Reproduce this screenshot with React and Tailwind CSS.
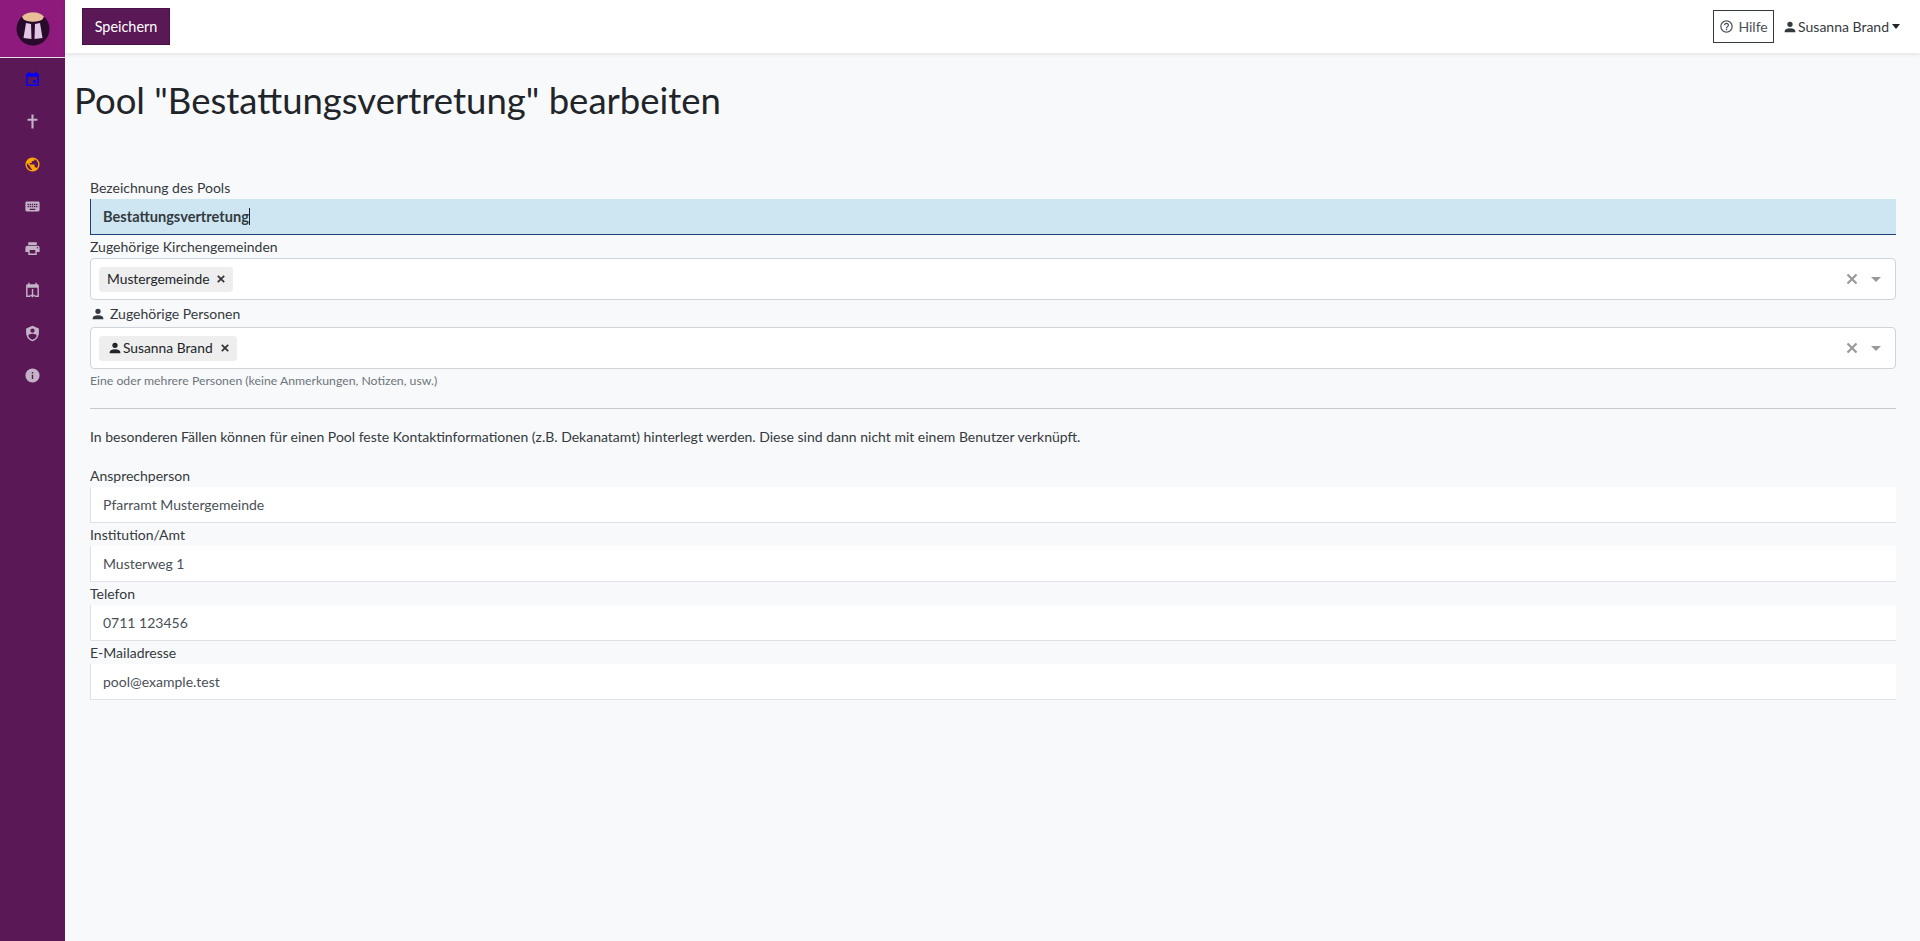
import React from 'react';

const paths = {
  today: 'M13,13H17V17H13M19,19H5V8H19M19,3H18V1H16V3H8V1H6V3H5C3.89,3 3,3.9 3,5V19A2,2 0 0,0 5,21H19A2,2 0 0,0 21,19V5A2,2 0 0,0 19,3Z',
  cross: 'M10.5,2H13.5V8H19V11H13.5V22H10.5V11H5V8H10.5Z',
  earth: 'M17.9,17.39C17.64,16.59 16.89,16 16,16H15V13A1,1 0 0,0 14,12H8V10H10A1,1 0 0,0 11,9V7H13A2,2 0 0,0 15,5V4.59C17.93,5.77 20,8.64 20,12C20,14.08 19.2,15.97 17.9,17.39M11,19.93C7.05,19.44 4,16.08 4,12C4,11.38 4.08,10.78 4.21,10.21L9,15V16A2,2 0 0,0 11,18M12,2A10,10 0 0,0 2,12A10,10 0 0,0 12,22A10,10 0 0,0 22,12A10,10 0 0,0 12,2Z',
  keyboard: 'M19,10H17V8H19M19,13H17V11H19M16,10H14V8H16M16,13H14V11H16M16,17H8V15H16M7,10H5V8H7M7,13H5V11H7M8,11H10V13H8M8,8H10V10H8M11,11H13V13H11M11,8H13V10H11M20,5H4C2.89,5 2,5.89 2,7V17A2,2 0 0,0 4,19H20A2,2 0 0,0 22,17V7C22,5.89 21.1,5 20,5Z',
  printer: 'M18,3H6V7H18M19,12A1,1 0 0,1 18,11A1,1 0 0,1 19,10A1,1 0 0,1 20,11A1,1 0 0,1 19,12M16,19H8V14H16M19,8H5A3,3 0 0,0 2,11V17H6V21H18V17H22V11A3,3 0 0,0 19,8Z',
  calendarDown: 'M6,1H8V3H16V1H18V3H19A2,2 0 0,1 21,5V21H15V19H19V8H5V19H9V21H3V5A2,2 0 0,1 5,3H6M11,10H13V18H16L12,22L8,18H11Z',
  shield: 'M12,1L3,5V11C3,16.55 6.84,21.74 12,23C17.16,21.74 21,16.55 21,11V5L12,1M12,5A3,3 0 0,1 15,8A3,3 0 0,1 12,11A3,3 0 0,1 9,8A3,3 0 0,1 12,5M17.13,17C15.92,18.85 14.11,20.24 12,20.92C9.89,20.24 8.08,18.85 6.87,17C6.53,16.5 6.24,16 6,15.47C6,13.82 8.71,12.47 12,12.47C15.29,12.47 18,13.79 18,15.47C17.76,16 17.47,16.5 17.13,17Z',
  info: 'M13,9H11V7H13M13,17H11V11H13M12,2A10,10 0 0,0 2,12A10,10 0 0,0 12,22A10,10 0 0,0 22,12A10,10 0 0,0 12,2Z',
  account: 'M12,4A4,4 0 0,1 16,8A4,4 0 0,1 12,12A4,4 0 0,1 8,8A4,4 0 0,1 12,4M12,14C16.42,14 20,15.79 20,18V20H4V18C4,15.79 7.58,14 12,14Z',
  help: 'M11,18H13V16H11V18M12,2A10,10 0 0,0 2,12A10,10 0 0,0 12,22A10,10 0 0,0 22,12A10,10 0 0,0 12,2M12,20C7.59,20 4,16.41 4,12C4,7.59 7.59,4 12,4C16.41,4 20,7.59 20,12C20,16.41 16.41,20 12,20M12,6A4,4 0 0,0 8,10H10A2,2 0 0,1 12,8A2,2 0 0,1 14,10C14,12 11,11.75 11,15H13C13,12.75 16,12.5 16,10A4,4 0 0,0 12,6Z',
};

const Icon = ({ name, className = '' }) => (
  <svg viewBox="0 0 24 24" fill="currentColor" className={`shrink-0 ${className}`}>
    <path d={paths[name]} />
  </svg>
);

const navItems = [
  { name: 'today', color: 'text-[#0000ff]' },
  { name: 'cross', color: 'text-[#c4b3c6]' },
  { name: 'earth', color: 'text-[#ffa500]' },
  { name: 'keyboard', color: 'text-[#c4b3c6]' },
  { name: 'printer', color: 'text-[#c4b3c6]' },
  { name: 'calendarDown', color: 'text-[#c4b3c6]' },
  { name: 'shield', color: 'text-[#c4b3c6]' },
  { name: 'info', color: 'text-[#c4b3c6]' },
];

const Logo = () => (
  <svg viewBox="0 0 34 34" className="w-[34px] h-[34px]">
    <circle cx="17" cy="17" r="16.5" fill="#2a0a2c" />
    <path d="M6 4.5 A16.5 16.5 0 0 1 28 4.5 Q27 8 23 9 Q17 10.5 11 9 Q7 8 6 4.5Z" fill="#e8bd98" />
    <path d="M10 11 L15 12 L15.5 27 L7.5 26 Z" fill="#e2c6e4" />
    <path d="M19 12 L24 11 L26.5 26 L18.5 27 Z" fill="#e2c6e4" />
  </svg>
);

const Sidebar = () => (
  <aside className="w-[65px] shrink-0 bg-[#5a1857] flex flex-col">
    <div className="h-[58px] bg-[#8e1a7e] border-b border-[#e8dbe8] flex items-center justify-center pt-[1px]">
      <Logo />
    </div>
    <nav className="flex flex-col items-center pt-[13px] pr-[1px] gap-[25.3px]">
      {navItems.map((item) => (
        <Icon key={item.name} name={item.name} className={`w-[17px] h-[17px] ${item.color}`} />
      ))}
    </nav>
  </aside>
);

const TextField = ({ label, value }) => (
  <div>
    <div className="h-[23px] leading-[23px]">{label}</div>
    <div className="h-[36px] bg-white border-l border-b border-[#dee2e6] pl-[12px] leading-[35px] text-[#495057]">{value}</div>
  </div>
);

const Chip = ({ children, person }) => (
  <span className="h-[25px] bg-[#eeeeee] rounded-[4px] pl-[8px] pr-[8px] flex items-center text-[13.8px] text-[#212529]">
    {person && <Icon name="account" className="w-[16px] h-[16px]" />}
    <span>{children}</span>
    <svg viewBox="0 0 8 8" className="w-[8px] h-[8px] ml-[8px] text-[#333333]">
      <path d="M0.8 0.8 L7.2 7.2 M7.2 0.8 L0.8 7.2" stroke="currentColor" strokeWidth="1.7" fill="none" />
    </svg>
  </span>
);

const SelectField = ({ children }) => (
  <div className="h-[42px] bg-white border border-[#ced4da] rounded-[4px] flex items-center justify-between pl-[8px] pr-[14px]">
    {children}
    <div className="flex items-center gap-[13px] text-[#999999]">
      <svg viewBox="0 0 12 12" className="w-[12px] h-[12px]">
        <path d="M1.5 1.5 L10.5 10.5 M10.5 1.5 L1.5 10.5" stroke="currentColor" strokeWidth="2.2" fill="none" />
      </svg>
      <span className="w-0 h-0 border-x-[5px] border-x-transparent border-t-[5px] border-t-[#999999]" />
    </div>
  </div>
);

const App = () => (
  <div className="flex h-screen overflow-hidden bg-[#f8f9fa] text-[#343a40] text-[14px] font-['Lato',sans-serif]">
    <Sidebar />
    <div className="flex-1 min-w-0 flex flex-col">
      <header className="h-[53px] shrink-0 bg-white shadow-[0_2px_4px_rgba(0,0,0,0.08)] flex items-center justify-between pl-[17px] pr-[20px]">
        <button className="h-[37px] w-[88px] bg-[#5a1857] border border-[#4a1048] text-white text-[14.4px]">Speichern</button>
        <div className="flex items-center">
          <button className="h-[33px] w-[61px] border border-[#343a40] flex items-center justify-center gap-[4px] text-[#495057]">
            <Icon name="help" className="w-[15px] h-[15px]" />
            Hilfe
          </button>
          <div className="flex items-center ml-[8px] text-[#343a40]">
            <Icon name="account" className="w-[16px] h-[16px]" />
            <span>Susanna Brand</span>
            <span className="ml-[3px] w-0 h-0 border-x-[4px] border-x-transparent border-t-[5px] border-t-[#212529]" />
          </div>
        </div>
      </header>
      <main className="pl-[9px] pr-[24px]">
        <h1 className="text-[36.5px] leading-[43px] mt-[26px] font-normal text-[#212529]">Pool "Bestattungsvertretung" bearbeiten</h1>
        <form className="pl-[16px] mt-[55px]">
          <div className="h-[22px] leading-[22px]">Bezeichnung des Pools</div>
          <div className="h-[36px] bg-[#cde6f1] border-l border-b border-[#1f3f77] pl-[12px] font-bold text-[14.6px] text-[#343a40] flex items-center">
            Bestattungsvertretung
            <span className="w-[1px] h-[17px] bg-[#212529]" />
          </div>
          <div className="h-[23px] leading-[23px]">Zugehörige Kirchengemeinden</div>
          <SelectField>
            <Chip>Mustergemeinde</Chip>
          </SelectField>
          <div className="h-[27px] flex items-center gap-[4px]">
            <Icon name="account" className="w-[16px] h-[16px]" />
            Zugehörige Personen
          </div>
          <SelectField>
            <Chip person>Susanna Brand</Chip>
          </SelectField>
          <div className="h-[24px] leading-[24px] text-[12.25px] text-[#6c757d]">Eine oder mehrere Personen (keine Anmerkungen, Notizen, usw.)</div>
          <hr className="mt-[15px] border-0 border-t border-[#c8c9cc]" />
          <p className="mt-[17px] h-[22px] leading-[22px]">
            In besonderen Fällen können für einen Pool feste Kontaktinformationen (z.B. Dekanatamt) hinterlegt werden. Diese sind dann nicht mit einem Benutzer verknüpft.
          </p>
          <div className="mt-[16px]">
            <TextField label="Ansprechperson" value="Pfarramt Mustergemeinde" />
            <TextField label="Institution/Amt" value="Musterweg 1" />
            <TextField label="Telefon" value="0711 123456" />
            <TextField label="E-Mailadresse" value="pool@example.test" />
          </div>
        </form>
      </main>
    </div>
  </div>
);

export default App;
